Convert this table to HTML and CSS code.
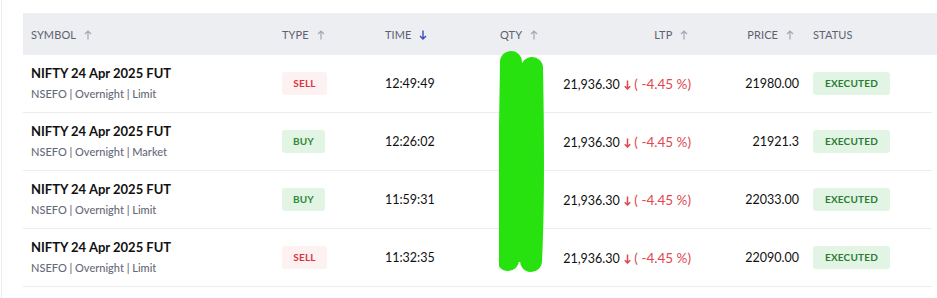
FILE: index.html
```html
<!DOCTYPE html>
<html lang="en">
<head>
<meta charset="utf-8">
<title>Orders</title>
<link rel="stylesheet" href="styles.css">
</head>
<body>
<div class="page">
  <div class="table">
    <div class="row head">
      <div class="c sym">SYMBOL <svg class="ar" width="8" height="10" viewBox="0 0 8 10"><path d="M4 9.5V1M1 4L4 1L7 4" fill="none" stroke="currentColor" stroke-width="1.2"/></svg></div>
      <div class="c typ">TYPE <svg class="ar" width="8" height="10" viewBox="0 0 8 10"><path d="M4 9.5V1M1 4L4 1L7 4" fill="none" stroke="currentColor" stroke-width="1.2"/></svg></div>
      <div class="c tim">TIME <svg class="ar act" width="8" height="10" viewBox="0 0 8 10"><path d="M4 0.5V9M1 6L4 9L7 6" fill="none" stroke="currentColor" stroke-width="1.4"/></svg></div>
      <div class="c qty">QTY <svg class="ar" width="8" height="10" viewBox="0 0 8 10"><path d="M4 9.5V1M1 4L4 1L7 4" fill="none" stroke="currentColor" stroke-width="1.2"/></svg></div>
      <div class="c ltp">LTP <svg class="ar" width="8" height="10" viewBox="0 0 8 10"><path d="M4 9.5V1M1 4L4 1L7 4" fill="none" stroke="currentColor" stroke-width="1.2"/></svg></div>
      <div class="c prc">PRICE <svg class="ar" width="8" height="10" viewBox="0 0 8 10"><path d="M4 9.5V1M1 4L4 1L7 4" fill="none" stroke="currentColor" stroke-width="1.2"/></svg></div>
      <div class="c sts">STATUS</div>
    </div>

    <div class="row">
      <div class="c sym"><div class="title">NIFTY 24 Apr 2025 FUT</div><div class="sub">NSEFO | Overnight | Limit</div></div>
      <div class="c typ"><span class="badge sell">SELL</span></div>
      <div class="c tim">12:49:49</div>
      <div class="c qty"></div>
      <div class="c ltp">21,936.30 <span class="chg"><svg class="dn" width="7" height="10" viewBox="0 0 7 10"><path d="M3.5 0.5V9M0.8 6.2L3.5 9L6.2 6.2" fill="none" stroke="currentColor" stroke-width="1.5"/></svg> ( -4.45 %)</span></div>
      <div class="c prc">21980.00</div>
      <div class="c sts"><span class="badge ok">EXECUTED</span></div>
    </div>

    <div class="row">
      <div class="c sym"><div class="title">NIFTY 24 Apr 2025 FUT</div><div class="sub">NSEFO | Overnight | Market</div></div>
      <div class="c typ"><span class="badge buy">BUY</span></div>
      <div class="c tim">12:26:02</div>
      <div class="c qty"></div>
      <div class="c ltp">21,936.30 <span class="chg"><svg class="dn" width="7" height="10" viewBox="0 0 7 10"><path d="M3.5 0.5V9M0.8 6.2L3.5 9L6.2 6.2" fill="none" stroke="currentColor" stroke-width="1.5"/></svg> ( -4.45 %)</span></div>
      <div class="c prc">21921.3</div>
      <div class="c sts"><span class="badge ok">EXECUTED</span></div>
    </div>

    <div class="row">
      <div class="c sym"><div class="title">NIFTY 24 Apr 2025 FUT</div><div class="sub">NSEFO | Overnight | Limit</div></div>
      <div class="c typ"><span class="badge buy">BUY</span></div>
      <div class="c tim">11:59:31</div>
      <div class="c qty"></div>
      <div class="c ltp">21,936.30 <span class="chg"><svg class="dn" width="7" height="10" viewBox="0 0 7 10"><path d="M3.5 0.5V9M0.8 6.2L3.5 9L6.2 6.2" fill="none" stroke="currentColor" stroke-width="1.5"/></svg> ( -4.45 %)</span></div>
      <div class="c prc">22033.00</div>
      <div class="c sts"><span class="badge ok">EXECUTED</span></div>
    </div>

    <div class="row">
      <div class="c sym"><div class="title">NIFTY 24 Apr 2025 FUT</div><div class="sub">NSEFO | Overnight | Limit</div></div>
      <div class="c typ"><span class="badge sell">SELL</span></div>
      <div class="c tim">11:32:35</div>
      <div class="c qty"></div>
      <div class="c ltp">21,936.30 <span class="chg"><svg class="dn" width="7" height="10" viewBox="0 0 7 10"><path d="M3.5 0.5V9M0.8 6.2L3.5 9L6.2 6.2" fill="none" stroke="currentColor" stroke-width="1.5"/></svg> ( -4.45 %)</span></div>
      <div class="c prc">22090.00</div>
      <div class="c sts"><span class="badge ok">EXECUTED</span></div>
    </div>

    <svg class="scribble" width="50" height="230" viewBox="0 0 50 230" aria-hidden="true">
      <path d="M12 12 C 11 60, 10 140, 9 210" stroke="#27e20e" stroke-width="22" stroke-linecap="round" fill="none"/>
      <path d="M33 18 C 34 70, 35 150, 32 211" stroke="#27e20e" stroke-width="22" stroke-linecap="round" fill="none"/>
      <path d="M20 20 L 20 212" stroke="#27e20e" stroke-width="20" fill="none"/>
    </svg>
  </div>
</div>
</body>
</html>
```

FILE: styles.css
```css
* { box-sizing: border-box; }
html, body { margin: 0; padding: 0; background: #fff; }
body {
  font-family: "Lato", "Inter", "Liberation Sans", sans-serif;
  color: #111;
  width: 937px;
  height: 298px;
  overflow: hidden;
}
.page {
  height: 298px;
  border-left: 1px solid #ececec;
  margin-left: 1px;
  padding: 13px 0 0 21px;
}
.table {
  position: relative;
  width: 909px;
}
.row {
  display: grid;
  grid-template-columns: 251px 103px 115px 63px 144px 106px 1fr;
  align-items: center;
  height: 58px;
  border-bottom: 1px solid #ececef;
  font-size: 12.5px;
}
.row.head {
  height: 42px;
  margin-right: -6px;
  background: #eceef2;
  border-bottom: 0;
  font-size: 11px;
  color: #5d6170;
  letter-spacing: 0.1px;
}
.c { padding-left: 8px; white-space: nowrap; }
.ltp, .prc { text-align: right; padding-left: 0; }
.ltp { padding-right: 8px; }
.prc { padding-right: 6px; }
.head .ltp { padding-right: 11px; }
.head .prc { padding-right: 11px; }
.ar { color: #a3a7b1; margin-left: 5px; vertical-align: -1px; }
.ar.act { color: #3a4bc6; }
.row:not(.head) .sym { padding-bottom: 3px; }
.title { font-weight: 700; font-size: 13px; color: #111; }
.sub { font-size: 11px; color: #666a78; margin-top: 6px; font-weight: 500; }
.badge {
  display: inline-block;
  font-size: 10px;
  font-weight: 700;
  line-height: 23px;
  height: 23px;
  border-radius: 3px;
  text-align: center;
  letter-spacing: 0.2px;
}
.sell { background: #fdf1f1; color: #d9353f; width: 45px; }
.buy { background: #e2f5e4; color: #2d8a38; width: 43px; }
.ok { background: #e2f5e4; color: #2c7a33; width: 77px; }
.chg { color: #e0474e; font-size: 13.5px; }
.dn { vertical-align: -1px; margin-left: 1px; }
.scribble { position: absolute; left: 476px; top: 37px; }
```
